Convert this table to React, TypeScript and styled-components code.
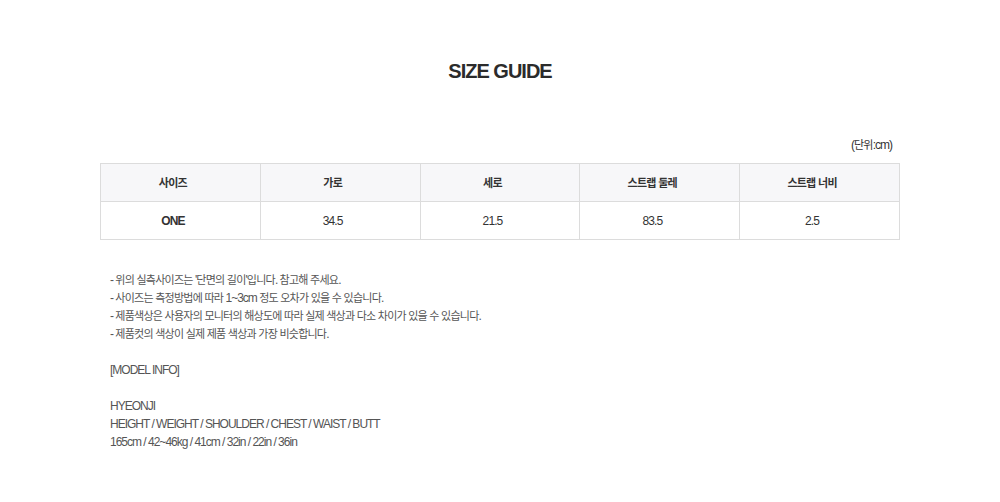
import React from "react";
import styled, { createGlobalStyle } from "styled-components";

const Global = createGlobalStyle`
  html, body { margin: 0; padding: 0; background: #fff; }
  body { font-family: "Liberation Sans", Arial, "Noto Sans CJK KR", sans-serif; color: #333; }
`;

const Page = styled.div`
  width: 1000px;
  padding-top: 58px;
  box-sizing: border-box;
`;

const Title = styled.h2`
  margin: 0;
  text-align: center;
  font-size: 20px;
  line-height: 26px;
  font-weight: 700;
  letter-spacing: -1px;
  color: #2b2b2b;
`;

const Wrap = styled.div`
  width: 800px;
  margin: 0 auto;
`;

const Ko = styled.span`
  font-family: "Noto Sans CJK KR", sans-serif;
  font-size: 11px;
  line-height: 1;
  letter-spacing: -0.75px;
`;

const Unit = styled.div`
  text-align: right;
  font-size: 12px;
  line-height: 16px;
  letter-spacing: -1px;
  color: #333;
  margin-top: 53px;
  padding-right: 8px;
`;

const Table = styled.table`
  width: 800px;
  margin-top: 10px;
  border-collapse: collapse;
  table-layout: fixed;
`;

const Th = styled.th`
  height: 37px;
  border: 1px solid #dcdcdc;
  background: #f7f7f9;
  font-size: 12px;
  line-height: 16px;
  font-weight: 700;
  color: #333;
  letter-spacing: -0.8px;
  padding: 0 15px 0 0;
`;

const Td = styled.td<{ $bold?: boolean }>`
  height: 37px;
  border: 1px solid #dcdcdc;
  text-align: center;
  font-size: 12px;
  line-height: 16px;
  font-weight: ${(p) => (p.$bold ? 700 : 400)};
  color: #333;
  letter-spacing: -0.9px;
  padding: 0 15px 0 0;
`;

const Notes = styled.div`
  margin-top: 31px;
  padding-left: 10px;
  font-size: 12px;
  line-height: 18px;
  letter-spacing: -1px;
  color: #555;
`;

const Line = styled.div`
  height: 18px;
`;

function ko(text: string) {
  return text.split(/([\uAC00-\uD7A3]+)/).map((part, i) =>
    /[\uAC00-\uD7A3]/.test(part) ? <Ko key={i}>{part}</Ko> : part
  );
}

const headers = ["사이즈", "가로", "세로", "스트랩 둘레", "스트랩 너비"];
const row = ["ONE", "34.5", "21.5", "83.5", "2.5"];

const lines = [
  "- 위의 실측사이즈는 '단면의 길이'입니다. 참고해 주세요.",
  "- 사이즈는 측정방법에 따라 1~3cm 정도 오차가 있을 수 있습니다.",
  "- 제품색상은 사용자의 모니터의 해상도에 따라 실제 색상과 다소 차이가 있을 수 있습니다.",
  "- 제품컷의 색상이 실제 제품 색상과 가장 비슷합니다.",
  "",
  "[MODEL INFO]",
  "",
  "HYEONJI",
  "HEIGHT / WEIGHT / SHOULDER / CHEST / WAIST / BUTT",
  "165cm / 42~46kg / 41cm / 32in / 22in / 36in",
];

export default function App() {
  return (
    <Page>
      <Global />
      <Title>SIZE GUIDE</Title>
      <Wrap>
        <Unit>({ko("단위")}:cm)</Unit>
        <Table>
          <thead>
            <tr>
              {headers.map((h) => (
                <Th key={h}>{ko(h)}</Th>
              ))}
            </tr>
          </thead>
          <tbody>
            <tr>
              {row.map((c, i) => (
                <Td key={i} $bold={i === 0}>
                  {c}
                </Td>
              ))}
            </tr>
          </tbody>
        </Table>
        <Notes>
          {lines.map((l, i) => (
            <Line key={i}>{ko(l)}</Line>
          ))}
        </Notes>
      </Wrap>
    </Page>
  );
}
